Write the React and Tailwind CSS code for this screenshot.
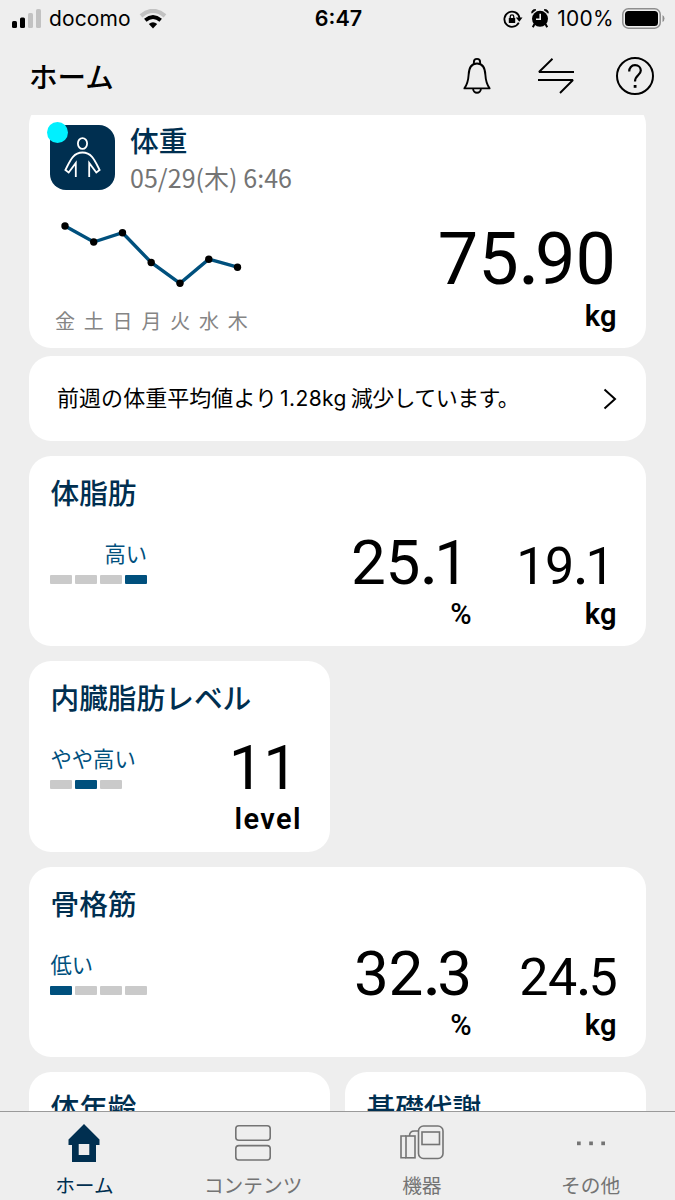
import clsx from "clsx";

const week = [
    { day: "金", x: 15, y: 11 },
    { day: "土", x: 43.7, y: 27 },
    { day: "日", x: 72.5, y: 17.7 },
    { day: "月", x: 101.2, y: 47.5 },
    { day: "火", x: 130, y: 68.3 },
    { day: "水", x: 158.8, y: 44.2 },
    { day: "木", x: 187.5, y: 52.2 },
];

function StatusBar() {
    return (
        <div className="flex h-[37px] shrink-0 items-center pl-3 pr-[10px] font-['Inter',sans-serif] text-black">
            <div className="flex flex-1 items-center">
                <svg width="30" height="20" viewBox="0 0 30 20">
                    <rect x="0" y="12" width="5" height="7" rx="1.5" />
                    <rect x="8" y="8.5" width="5" height="10.5" rx="1.5" />
                    <rect x="16" y="4" width="5" height="15" rx="1.5" fill="#c2c2c2" />
                    <rect x="24" y="0" width="5" height="19" rx="1.5" fill="#c2c2c2" />
                </svg>
                <span className="ml-[7px] text-[21px] leading-none tracking-[0.1px]">docomo</span>
                <svg width="28" height="20" viewBox="0 0 28 20" fill="none" className="ml-2">
                    <path d="M2 6.8Q14 -3 26 6.8" stroke="#c2c2c2" strokeWidth="4.2" />
                    <path d="M6.3 11.2Q14 4.8 21.7 11.2" stroke="#000" strokeWidth="3.8" />
                    <path d="M9.8 15Q14 11.4 18.2 15L14 19.4Z" fill="#000" />
                </svg>
            </div>
            <span className="text-[21.5px] font-semibold leading-none">6:47</span>
            <div className="flex flex-1 items-center justify-end">
                <svg width="20" height="18" viewBox="0 0 20 18" fill="none" stroke="#000" strokeWidth="1.8">
                    <path d="M15.8 12.6A7.6 7.6 0 1 1 16.5 8" />
                    <path d="M12.8 7.6H19.5L16.3 11.8Z" fill="#000" stroke="none" />
                    <rect x="5.8" y="8" width="6.4" height="5" rx="0.6" fill="#000" stroke="none" />
                    <path d="M7.2 8.5V6.7A1.8 1.8 0 0 1 10.8 6.7V8.5" strokeWidth="1.3" />
                </svg>
                <svg width="18" height="19" viewBox="0 0 18 19" className="ml-[8px]">
                    <circle cx="9" cy="9.8" r="8" />
                    <path d="M0.8 4.2A3 3 0 0 1 5 0.8ZM17.2 4.2A3 3 0 0 0 13 0.8Z" stroke="#000" strokeWidth="0.8" />
                    <path d="M3.5 15L1.8 18.2M14.5 15L16.2 18.2" stroke="#000" strokeWidth="2" />
                    <path d="M9.2 4.8V10.3H5" stroke="#eee" strokeWidth="1.6" fill="none" />
                </svg>
                <span className="ml-[8px] text-[21px] leading-none tracking-[0.3px]">100%</span>
                <svg width="43" height="21" viewBox="0 0 43 21" className="ml-[8px]">
                    <rect x="0.8" y="0.8" width="37.4" height="19.4" rx="5.5" fill="none" stroke="#8e8e8e" strokeWidth="1.5" />
                    <rect x="3" y="3" width="33" height="15" rx="3.5" />
                    <path d="M40.5 7V14Q42.5 13 42.5 10.5Q42.5 8 40.5 7Z" fill="#8e8e8e" />
                </svg>
            </div>
        </div>
    );
}

function Header() {
    return (
        <header className="flex h-[78px] shrink-0 items-center justify-between pl-[29px] pr-5">
            <h1 className="text-[28.5px] font-medium leading-none text-black">ホーム</h1>
            <div className="flex items-center">
                <svg width="28" height="38" viewBox="0 0 28 38" fill="none" stroke="#000" strokeWidth="1.9" strokeLinejoin="round">
                    <path d="M1.4 31.4C4.5 27 5.3 23.5 5.6 18C5.9 10.5 8.5 6.5 14 6.5C19.5 6.5 22.1 10.5 22.4 18C22.7 23.5 23.5 27 26.6 31.4Z" />
                    <path d="M10.9 6.9V5A3.1 3.1 0 0 1 17.1 5V6.9M10.1 31.6A3.9 4.2 0 0 0 17.9 31.6" />
                </svg>
                <svg width="38" height="36" viewBox="0 0 38 36" fill="none" stroke="#000" strokeWidth="1.9" strokeLinejoin="bevel" className="ml-[46px]">
                    <path d="M37 14H2L15.5 0.8M1 22H36L23 35" />
                </svg>
                <svg width="40" height="40" viewBox="0 0 40 40" fill="none" stroke="#000" strokeWidth="2" className="ml-[40px]">
                    <circle cx="20" cy="20" r="18" />
                    <path d="M14.2 15.5C14.2 11.7 16.5 9.2 20 9.2C23.5 9.2 25.8 11.4 25.8 14.6C25.8 19.2 20 19 20 25.6" strokeWidth="2.2" />
                    <rect x="18.7" y="29" width="2.8" height="2.8" fill="#000" stroke="none" />
                </svg>
            </div>
        </header>
    );
}

function Title({ children }) {
    return <h2 className="text-[28.7px] font-medium leading-9 text-[#002f50]">{children}</h2>;
}

// Digits with a tightened, slightly heavier decimal point
function Digits({ value, className }) {
    const [whole, fraction] = value.split(".");
    return (
        <span className={clsx("font-['Roboto',sans-serif]", className)}>
            {whole}
            {fraction && <span className="font-medium tracking-[-0.05em]">.</span>}
            {fraction}
        </span>
    );
}

function Unit({ children }) {
    return (
        <span
            className={clsx(
                "mt-[6px] font-['Roboto',sans-serif] text-[29px] leading-[29px]",
                children === "%" ? "font-medium" : "font-semibold",
                children === "level" ? "-mr-px tracking-[1.4px]" : "tracking-[0.4px]"
            )}
        >
            {children}
        </span>
    );
}

function LevelBar({ label, count, active, alignEnd }) {
    return (
        <div className="mt-[29px] w-fit">
            <p className={clsx("h-7 text-[21.3px] leading-7 text-[#00507d]", alignEnd && "text-right")}>{label}</p>
            <div className="-ml-[0.5px] mt-[8px] flex gap-[3px]">
                {Array.from({ length: count }, (_, i) => (
                    <span key={i} className={clsx("h-[9px] w-[22px] rounded-[1px]", i === active ? "bg-[#00507d]" : "bg-[#cacaca]")} />
                ))}
            </div>
        </div>
    );
}

function WeightCard() {
    return (
        <section className="-mt-3 h-[245px] shrink-0 rounded-[22px] bg-white pl-[21px] pr-[29px] pt-[22px]">
            <div className="flex h-[65px]">
                <div className="relative h-[65px] w-[65px] rounded-[16px] bg-[#002f50]">
                    <span className="absolute -left-[3px] -top-[3px] h-[21px] w-[21px] rounded-full bg-[#00f0ff]" />
                    <svg width="65" height="65" viewBox="0 0 65 65" fill="none" stroke="#fff" strokeWidth="1.8">
                        <ellipse cx="32.5" cy="18.5" rx="4.6" ry="5.4" />
                        <path d="M25.8 52V38L18.7 47.5L15.4 45C20 36 23 27.5 32.5 27.5C42 27.5 45 36 49.6 45L46.3 47.5L39.2 38V52" />
                    </svg>
                </div>
                <div className="ml-[15px]">
                    <h2 className="-mt-[3px] text-[28.7px] font-medium leading-9 text-[#002f50]">体重</h2>
                    <p className="mt-px text-[25px] leading-9 tracking-[0.05px] text-[#747474]">05/29(木) 6:46</p>
                </div>
            </div>
            <div className="mt-[25px] flex justify-between">
                <div>
                    <svg width="200" height="80" viewBox="0 0 200 80">
                        <polyline points={week.map((p) => `${p.x},${p.y}`).join(" ")} fill="none" stroke="#00507d" strokeWidth="3.4" />
                        {week.map((p) => (
                            <circle key={p.day} cx={p.x} cy={p.y} r="3.7" />
                        ))}
                    </svg>
                    <div className="mt-[12px] flex gap-[8.8px] pl-[5px] text-[20px] leading-7 text-[#858585]">
                        {week.map((p) => (
                            <span key={p.day}>{p.day}</span>
                        ))}
                    </div>
                </div>
                <div className="mt-[9px] flex flex-col items-end text-black">
                    <Digits value="75.90" className="mr-px text-[72px] leading-[72px]" />
                    <Unit>kg</Unit>
                </div>
            </div>
        </section>
    );
}

function MetricCard({ title, label, count, active, alignEnd, values, narrow }) {
    return (
        <section className={clsx("mt-[15px] h-[190.3px] shrink-0 rounded-[22px] bg-white pl-[21.5px] pr-[29px] pt-[18px]", narrow && "w-[301px]")}>
            <Title>{title}</Title>
            <div className="flex justify-between">
                <LevelBar label={label} count={count} active={active} alignEnd={alignEnd} />
                <div className="mt-[22px] flex items-end">
                    {values.map((v, i) => (
                        <div key={v.unit} className={clsx("flex flex-col items-end text-black", i === 1 && "w-[145px]")}>
                            <Digits
                                value={v.value}
                                className={clsx(
                                    i === 0 ? "text-[62px] leading-[62px] tracking-[-0.2px]" : "text-[52px] leading-[55px] tracking-[-0.6px]",
                                    v.value.endsWith("1") ? "mr-[3px]" : "mr-0"
                                )}
                            />
                            <Unit>{v.unit}</Unit>
                        </div>
                    ))}
                </div>
            </div>
        </section>
    );
}

function TabBar() {
    const tabs = [
        {
            label: "ホーム",
            icon: (
                <svg width="34" height="40" viewBox="0 0 34 40">
                    <path fillRule="evenodd" fill="#002f50" d="M17 1L32.5 16.5V22H29V39H5V22H1.5V16.5ZM11.7 21V32H22.3V21Z" />
                </svg>
            ),
        },
        {
            label: "コンテンツ",
            icon: (
                <svg width="36" height="38" viewBox="0 0 36 38" fill="none" stroke="#747474" strokeWidth="1.6">
                    <rect x="0.8" y="1.8" width="34.4" height="14.4" rx="3" />
                    <rect x="0.8" y="21.6" width="34.4" height="14.4" rx="3" />
                </svg>
            ),
        },
        {
            label: "機器",
            icon: (
                <svg width="44" height="36" viewBox="0 0 44 36" fill="none" stroke="#747474" strokeWidth="1.6">
                    <rect x="18.5" y="1" width="24.5" height="32.5" rx="5" />
                    <rect x="22" y="7" width="17.5" height="12.5" />
                    <rect x="6" y="11" width="9" height="21.8" />
                    <path d="M6 11H1V32.8H6M9.5 11C9.5 7.5 11.5 6 14.5 6H18.5" />
                </svg>
            ),
        },
        {
            label: "その他",
            icon: (
                <svg width="30" height="5" viewBox="0 0 30 5" fill="#747474">
                    <rect x="1" y="0.5" width="3.7" height="3.7" />
                    <rect x="13.2" y="0.5" width="3.7" height="3.7" />
                    <rect x="25.3" y="0.5" width="3.7" height="3.7" />
                </svg>
            ),
        },
    ];

    return (
        <nav className="grid h-[89px] shrink-0 grid-cols-4 border-t border-[#9a9a9a] bg-[#eee]">
            {tabs.map((tab, i) => (
                <a key={tab.label} className={clsx("flex flex-col items-center pt-[11px]", i === 0 ? "text-[#002f50]" : "text-[#747474]")}>
                    <span className="flex h-10 items-center">{tab.icon}</span>
                    <span className="mt-[8px] text-[19.7px] leading-7">{tab.label}</span>
                </a>
            ))}
        </nav>
    );
}

function App() {
    return (
        <div className="flex h-[1200px] w-[675px] flex-col overflow-hidden bg-[#eee] font-['Noto_Sans_CJK_JP',sans-serif]">
            <StatusBar />
            <Header />
            <main className="flex min-h-0 flex-1 flex-col overflow-hidden pl-[29px] pr-[29px]">
                <WeightCard />
                <section className="mt-[8px] flex h-[85px] shrink-0 items-center justify-between rounded-[22px] bg-white pl-[28px] pr-[29px] text-black">
                    <p className="-mt-[3px] text-[22px] leading-8 tracking-[0.05px]">
                        前週の体重平均値より
                        <span className="ml-[3px] mr-[4px] font-['Inter',sans-serif] text-[21px] tracking-[0.4px]">1.28kg</span>
                        <span className="tracking-[-0.6px]">減少しています。</span>
                    </p>
                    <svg width="14" height="22" viewBox="0 0 14 22" fill="none" stroke="#000" strokeWidth="2">
                        <path d="M1.5 1.5L12 11L1.5 20.5" />
                    </svg>
                </section>
                <MetricCard
                    title="体脂肪"
                    label="高い"
                    count={4}
                    active={3}
                    alignEnd
                    values={[{ value: "25.1", unit: "%" }, { value: "19.1", unit: "kg" }]}
                />
                <MetricCard title="内臓脂肪レベル" label="やや高い" count={3} active={1} narrow values={[{ value: "11", unit: "level" }]} />
                <MetricCard
                    title="骨格筋"
                    label="低い"
                    count={4}
                    active={0}
                    values={[{ value: "32.3", unit: "%" }, { value: "24.5", unit: "kg" }]}
                />
                <div className="mt-[15px] grid shrink-0 grid-cols-2 gap-[15px]">
                    {["体年齢", "基礎代謝"].map((title) => (
                        <section key={title} className="h-[190px] rounded-[22px] bg-white pl-[21.5px] pt-[17px]">
                            <Title>{title}</Title>
                        </section>
                    ))}
                </div>
            </main>
            <TabBar />
        </div>
    );
}

export default App;
